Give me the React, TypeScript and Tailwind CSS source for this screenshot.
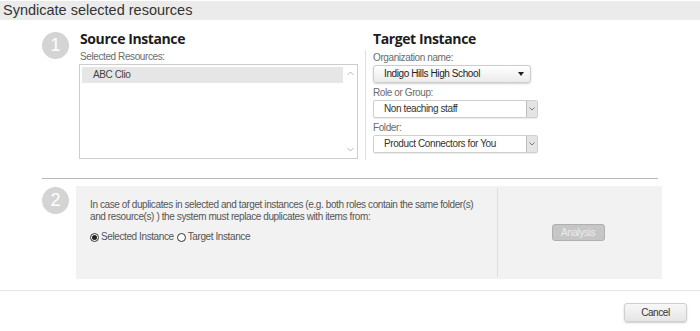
import React from 'react'

const small = "font-['Liberation_Sans',Arial,sans-serif] text-[10px] tracking-[-0.4px]"

function StepCircle({ n }: { n: number }) {
    return (
        <div className="w-[27px] h-[27px] shrink-0 rounded-full bg-[#d4d4d4] flex items-center justify-center text-white text-[18px] font-['Liberation_Sans',sans-serif]">
            {n}
        </div>
    )
}

function Chevron({ up = false }: { up?: boolean }) {
    return (
        <svg width="7" height="5" viewBox="0 0 7 5" className="block">
            <polyline
                points={up ? '0.5,4 3.5,1 6.5,4' : '0.5,1 3.5,4 6.5,1'}
                fill="none"
                stroke="#b8b8b8"
                strokeWidth="1"
            />
        </svg>
    )
}

function BoxSelect({ value }: { value: string }) {
    return (
        <div className="w-[165px] h-[18px] flex border border-[#cfcfcf] rounded-[2px] bg-white shadow-[0_1px_1px_rgba(0,0,0,0.08)]">
            <div className={`flex-1 pl-[10px] leading-[16px] text-[#333] ${small}`}>{value}</div>
            <div className="w-[11px] bg-[#e4e4e4] border-l border-[#bdbdbd] flex items-center justify-center">
                <svg width="6" height="4" viewBox="0 0 6 4">
                    <polyline points="0.5,0.5 3,3 5.5,0.5" fill="none" stroke="#777" strokeWidth="1" />
                </svg>
            </div>
        </div>
    )
}

function Radio({ checked }: { checked: boolean }) {
    return (
        <span className="w-[9px] h-[9px] rounded-full border border-[#333] bg-white flex items-center justify-center shrink-0">
            {checked && <span className="w-[5px] h-[5px] rounded-full bg-[#222]" />}
        </span>
    )
}

export default function App() {
    return (
        <div className="w-[700px] h-[331px] overflow-hidden bg-white">
            {/* Title bar */}
            <div className="mt-[1px] h-[19px] bg-[#ebebeb] pl-[3px] text-[14.5px] leading-[19px] text-[#333] font-['Liberation_Sans',sans-serif]">
                Syndicate selected resources
            </div>

            {/* Step 1 */}
            <div className="flex pl-[42px] pt-[8px]">
                <div className="mt-[4px]">
                    <StepCircle n={1} />
                </div>

                <div className="ml-[10px] w-[279px]">
                    <h2 className="pl-[1px] text-[14px] leading-[22px] font-bold text-[#1d1d1d] font-['Open_Sans',sans-serif] tracking-[-0.4px]">
                        Source Instance
                    </h2>
                    <div className={`pl-[1px] leading-[14px] text-[#6b6b6b] ${small}`}>Selected Resources:</div>
                    <div className="h-[95px] border border-[#cdcdcd] flex p-[2px] pr-0">
                        <div className="flex-1">
                            <div className={`h-[16px] bg-[#e6e6e6] pl-[11px] leading-[16px] text-[#444] ${small}`}>
                                ABC Clio
                            </div>
                        </div>
                        <div className="w-[14px] flex flex-col items-center justify-between py-[4px]">
                            <Chevron up />
                            <Chevron />
                        </div>
                    </div>
                </div>

                <div className="ml-[7px]">
                    <h2 className="pl-[8px] text-[14px] leading-[22px] font-bold text-[#1d1d1d] font-['Open_Sans',sans-serif] tracking-[-0.4px]">
                        Target Instance
                    </h2>
                    <div className={`h-[110px] border-l border-[#dedede] pl-[7px] pt-[2px] text-[#6b6b6b] ${small}`}>
                        <div className="leading-[12px]">Organization name:</div>
                        <div className="w-[158px] h-[18px] mt-[1px] flex items-center justify-between pl-[10px] pr-[6px] border border-[#cccccc] rounded-[3px] bg-gradient-to-b from-white to-[#ebebeb] shadow-[0_1px_2px_rgba(0,0,0,0.18)]">
                            <span className="text-[#1f1f1f] leading-[16px]">Indigo Hills High School</span>
                            <span className="w-0 h-0 border-l-[3px] border-r-[3px] border-t-[4px] border-l-transparent border-r-transparent border-t-[#222]" />
                        </div>
                        <div className="leading-[12px] mt-[4px]">Role or Group:</div>
                        <div className="mt-[1px]">
                            <BoxSelect value="Non teaching staff" />
                        </div>
                        <div className="leading-[12px] mt-[4px]">Folder:</div>
                        <div className="mt-[1px]">
                            <BoxSelect value="Product Connectors for You" />
                        </div>
                    </div>
                </div>
            </div>

            {/* Divider */}
            <div className="ml-[42px] w-[616px] mt-[18px] border-t border-[#b9b9b9]" />

            {/* Step 2 */}
            <div className="flex ml-[42px] mt-[7px]">
                <div className="mt-[1px]">
                    <StepCircle n={2} />
                </div>
                <div className="ml-[7px] w-[586px] h-[93px] bg-[#f2f2f2] flex">
                    <div className={`w-[421px] pl-[14px] pr-[6px] pt-[13px] leading-[12px] text-[#555] ${small}`}>
                        <p>
                            In case of duplicates in selected and target instances (e.g. both roles contain the same folder(s)
                            and resource(s) ) the system must replace duplicates with items from:
                        </p>
                        <div className="mt-[8px] flex items-center gap-[2px]">
                            <Radio checked />
                            <span className="mr-[1px]">Selected Instance</span>
                            <Radio checked={false} />
                            <span>Target Instance</span>
                        </div>
                    </div>
                    <div className="flex-1 my-[2px] border-l border-[#dedede] flex items-center justify-center pr-[4px]">
                        <button className={`w-[53px] h-[17px] rounded-[3px] bg-[#c6c6c6] border border-[#b0b0b0] leading-[15px] text-[#ececec] ${small}`}>
                            Analysis
                        </button>
                    </div>
                </div>
            </div>

            {/* Footer */}
            <div className="mt-[11px] border-t border-[#e6e6e6]" />
            <div className="flex justify-end pr-[13px] pt-[12px]">
                <button className={`w-[63px] h-[19px] rounded-[3px] border border-[#cfcfcf] bg-gradient-to-b from-[#f7f7f7] to-[#e6e6e6] shadow-[0_1px_2px_rgba(0,0,0,0.2)] leading-[17px] text-[#333] ${small}`}>
                    Cancel
                </button>
            </div>
        </div>
    )
}
